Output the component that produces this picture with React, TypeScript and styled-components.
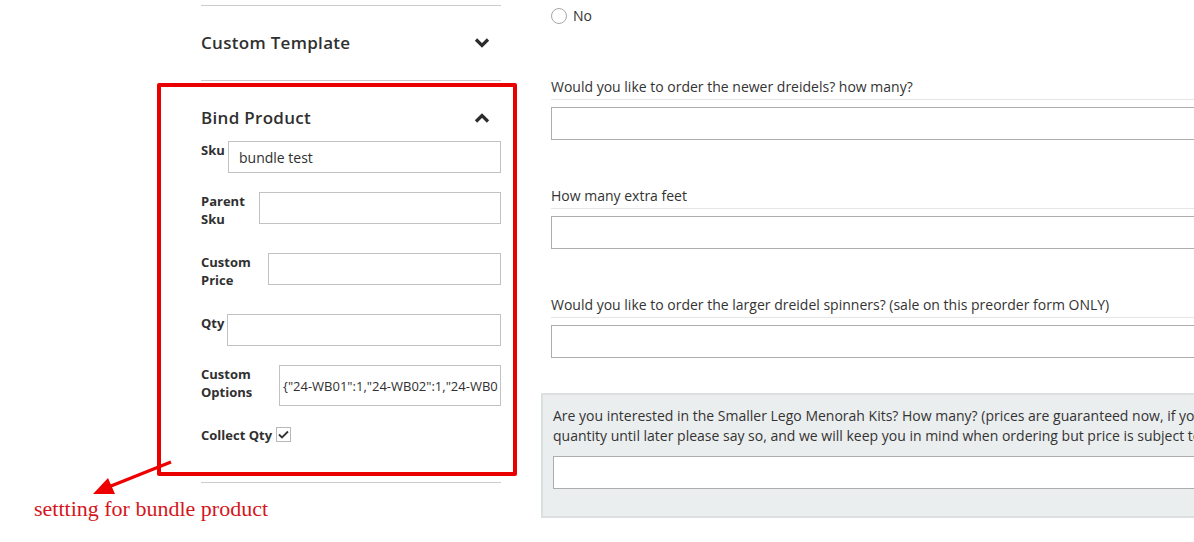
import React from "react";
import styled, { createGlobalStyle } from "styled-components";

const Global = createGlobalStyle`
  html, body { margin: 0; padding: 0; background: #fff; }
  body { font-family: "Open Sans", "Liberation Sans", sans-serif; color: #333; overflow: hidden; }
  #root { width: 1194px; height: 542px; overflow: hidden; }
  * { box-sizing: border-box; }
`;

const Page = styled.div`
  position: relative;
  display: flex;
  gap: 50px;
  padding-left: 201px;
  width: 1194px;
  height: 542px;
  overflow: hidden;
`;

const LeftCol = styled.div`
  width: 300px;
  flex: none;
  padding-top: 5px;
`;

const Section = styled.div`
  border-top: 1px solid #ccc;
`;

const SectionEnd = styled.div`
  border-top: 1px solid #ccc;
  margin-top: 38px;
`;

const SectionHead = styled.div<{ $open?: boolean }>`
  display: flex;
  align-items: center;
  justify-content: space-between;
  height: 24px;
  margin: 24px 0 ${(p) => (p.$open ? "12px" : "26px")};
  font-size: 17px;
  font-weight: 600;
  color: #303030;
  letter-spacing: 0.3px;
`;

const Chevron = ({ up }: { up?: boolean }) => (
  <svg width="16" height="10" viewBox="0 0 16 10" style={{ marginRight: 11, marginTop: 2 }}>
    <polyline
      points={up ? "2,8.5 8,2.5 14,8.5" : "2,1.5 8,7.5 14,1.5"}
      fill="none"
      stroke="#2d2d2d"
      strokeWidth="3.2"
      strokeLinecap="butt"
    />
  </svg>
);

const Fields = styled.div`
  display: flex;
  flex-direction: column;
  gap: 19px;
`;

const Row = styled.div`
  display: flex;
  align-items: flex-start;
`;

const Label = styled.label<{ $w: number }>`
  width: ${(p) => p.$w}px;
  flex: none;
  font-size: 13px;
  font-weight: 700;
  line-height: 18px;
  color: #303030;
  padding-bottom: 6px;
`;

const TextInput = styled.div<{ $h?: number; $size?: number; $pad?: number }>`
  flex: 1;
  height: ${(p) => p.$h ?? 32}px;
  border: 1px solid #c2c2c2;
  background: #fff;
  font-size: ${(p) => p.$size ?? 14}px;
  color: #303030;
  display: flex;
  align-items: center;
  padding-left: ${(p) => p.$pad ?? 10}px;
  white-space: nowrap;
  overflow: hidden;
`;

const CheckRow = styled.div`
  display: flex;
  align-items: center;
  gap: 4px;
  font-size: 13px;
  font-weight: 700;
  line-height: 18px;
  color: #303030;
`;

const CheckBox = styled.span`
  width: 15px;
  height: 15px;
  border: 1px solid #b8b8b8;
  display: inline-flex;
  align-items: center;
  justify-content: center;
  margin-top: -2px;
`;

const RightCol = styled.div`
  width: 700px;
  flex: none;
  font-size: 14px;
  color: #333;
`;

const RadioRow = styled.div`
  display: flex;
  align-items: center;
  gap: 6px;
  margin-top: 7px;
  height: 17px;
`;

const Radio = styled.span`
  width: 16px;
  height: 16px;
  border: 1px solid #a8a8a8;
  border-radius: 50%;
`;

const Question = styled.div<{ $top: number }>`
  margin-top: ${(p) => p.$top}px;
`;

const QLabel = styled.div`
  line-height: 20px;
  padding-bottom: 2px;
  border-bottom: 1px solid #e6e6e6;
  margin-bottom: 7px;
  white-space: nowrap;
`;

const QInput = styled.div`
  height: 33px;
  border: 1px solid #adadad;
  background: #fff;
`;

const GrayBox = styled.div`
  margin: 35px 0 0 -10px;
  background: #ebeeef;
  border: 2px solid #dcdfe0;
  padding: 11px 0 27px 10px;
`;

const GrayText = styled.div`
  line-height: 20px;
  white-space: nowrap;
  margin-bottom: 10px;
`;

const Annotation = styled.div`
  position: absolute;
  left: 157px;
  top: 83px;
  width: 360px;
  height: 393px;
  border: 4px solid #ea0000;
  border-radius: 2px;
  pointer-events: none;
`;

const ArrowSvg = styled.svg`
  position: absolute;
  left: 0;
  top: 0;
  pointer-events: none;
`;

const Note = styled.div`
  position: absolute;
  left: 34px;
  top: 496px;
  font-family: "Liberation Serif", serif;
  font-size: 22px;
  color: #d4161c;
`;

export default function App() {
  return (
    <>
      <Global />
      <Page>
        <LeftCol>
          <Section>
            <SectionHead>
              <span>Custom Template</span>
              <Chevron />
            </SectionHead>
          </Section>
          <Section>
            <SectionHead $open>
              <span>Bind Product</span>
              <Chevron up />
            </SectionHead>
            <Fields>
              <Row>
                <Label $w={27}>Sku</Label>
                <TextInput>bundle test</TextInput>
              </Row>
              <Row>
                <Label $w={58}>Parent Sku</Label>
                <TextInput />
              </Row>
              <Row>
                <Label $w={67}>Custom Price</Label>
                <TextInput />
              </Row>
              <Row>
                <Label $w={26}>Qty</Label>
                <TextInput />
              </Row>
              <Row>
                <Label $w={78}>Custom Options</Label>
                <TextInput $h={41} $size={13} $pad={3}>
                  {'{"24-WB01":1,"24-WB02":1,"24-WB0'}
                </TextInput>
              </Row>
              <CheckRow>
                <span>Collect Qty</span>
                <CheckBox>
                  <svg width="11" height="9" viewBox="0 0 11 9">
                    <polyline points="1,4.5 4,7.5 10,1.5" fill="none" stroke="#333" strokeWidth="1.8" />
                  </svg>
                </CheckBox>
              </CheckRow>
            </Fields>
            <SectionEnd />
          </Section>
        </LeftCol>
        <RightCol>
          <RadioRow>
            <Radio />
            <span>No</span>
          </RadioRow>
          <Question $top={53}>
            <QLabel>Would you like to order the newer dreidels? how many?</QLabel>
            <QInput />
          </Question>
          <Question $top={46}>
            <QLabel>How many extra feet</QLabel>
            <QInput />
          </Question>
          <Question $top={46}>
            <QLabel>Would you like to order the larger dreidel spinners? (sale on this preorder form ONLY)</QLabel>
            <QInput />
          </Question>
          <GrayBox>
            <GrayText>
              Are you interested in the Smaller Lego Menorah Kits? How many? (prices are guaranteed now, if you need to hold off on
              <br />
              quantity until later please say so, and we will keep you in mind when ordering but price is subject to change)
            </GrayText>
            <QInput />
          </GrayBox>
        </RightCol>
        <Annotation />
        <ArrowSvg width="200" height="542" viewBox="0 0 200 542">
          <line x1="171" y1="462" x2="106" y2="488" stroke="#ee0000" strokeWidth="3.2" />
          <polygon points="93,494 108,478 115,494" fill="#ee0000" />
        </ArrowSvg>
        <Note>settting for bundle product</Note>
      </Page>
    </>
  );
}
